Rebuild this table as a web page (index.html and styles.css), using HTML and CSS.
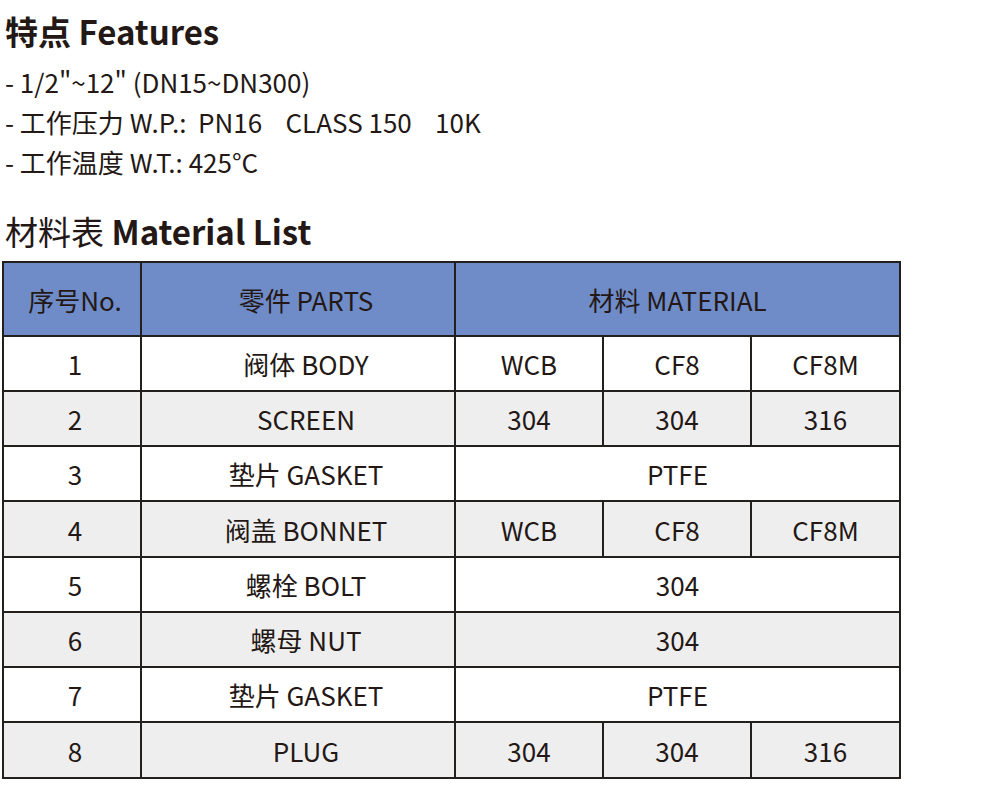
FILE: index.html
```html
<!DOCTYPE html>
<html lang="zh">
<head>
<meta charset="utf-8">
<title>Features / Material List</title>
<link rel="stylesheet" href="styles.css">
</head>
<body>
<div class="page">
  <h1 class="title title-top">特点 Features</h1>
  <ul class="features">
    <li>- 1/2"~12" (DN15~DN300)</li>
    <li>- 工作压力 W.P.:&nbsp; PN16&nbsp;&nbsp;&nbsp; CLASS 150&nbsp;&nbsp;&nbsp; 10K</li>
    <li>- 工作温度 W.T.: 425°C</li>
  </ul>
  <h2 class="title title-list"><span class="light">材料表</span> Material List</h2>
  <table class="mat">
    <colgroup>
      <col class="c-no"><col class="c-part"><col class="c-m"><col class="c-m"><col class="c-m3">
    </colgroup>
    <thead>
      <tr><th class="no">序号No.</th><th class="part">零件 PARTS</th><th colspan="3">材料 MATERIAL</th></tr>
    </thead>
    <tbody>
      <tr><td class="no">1</td><td class="part">阀体 BODY</td><td>WCB</td><td>CF8</td><td>CF8M</td></tr>
      <tr class="alt"><td class="no">2</td><td class="part">SCREEN</td><td>304</td><td>304</td><td>316</td></tr>
      <tr><td class="no">3</td><td class="part">垫片 GASKET</td><td colspan="3">PTFE</td></tr>
      <tr class="alt"><td class="no">4</td><td class="part">阀盖 BONNET</td><td>WCB</td><td>CF8</td><td>CF8M</td></tr>
      <tr><td class="no">5</td><td class="part">螺栓 BOLT</td><td colspan="3">304</td></tr>
      <tr class="alt"><td class="no">6</td><td class="part">螺母 NUT</td><td colspan="3">304</td></tr>
      <tr><td class="no">7</td><td class="part">垫片 GASKET</td><td colspan="3">PTFE</td></tr>
      <tr class="alt"><td class="no">8</td><td class="part">PLUG</td><td>304</td><td>304</td><td>316</td></tr>
    </tbody>
  </table>
</div>
</body>
</html>
```
FILE: styles.css
```css
html, body {
  margin: 0;
  padding: 0;
  background: #ffffff;
}
body {
  font-family: "Noto Sans CJK SC", "Noto Sans", sans-serif;
  color: #231815;
}
.page {
  padding: 0 0 0 2px;
}
.title {
  margin: 0;
  font-size: 33px;
  line-height: 40px;
  font-weight: 700;
  padding-left: 3px;
}
.title-top {
  margin-top: 11px;
}
.title-list {
  margin-top: 29px;
}
.light {
  font-weight: 400;
}
.features {
  list-style: none;
  margin: 11px 0 0 0;
  padding: 0 0 0 3px;
  font-size: 26px;
  line-height: 40px;
}
.mat {
  margin-top: 10px;
  border-collapse: collapse;
  table-layout: fixed;
  width: 898px;
  font-size: 26px;
}
.c-no { width: 138px; }
.c-part { width: 314px; }
.c-m { width: 148px; }
.c-m3 { width: 149px; }
.mat th, .mat td {
  border: 2px solid #231f1c;
  text-align: center;
  padding: 0;
  font-weight: 400;
}
.mat .no {
  padding-left: 6px;
}
.mat .part {
  padding-left: 16px;
}
.mat th {
  background: #6f8cc8;
  height: 72px;
}
.mat td {
  height: 53px;
  background: #ffffff;
}
.mat tbody tr:nth-child(4n) td {
  height: 54px;
}
.mat tr.alt td {
  background: #eeeeee;
}
```
